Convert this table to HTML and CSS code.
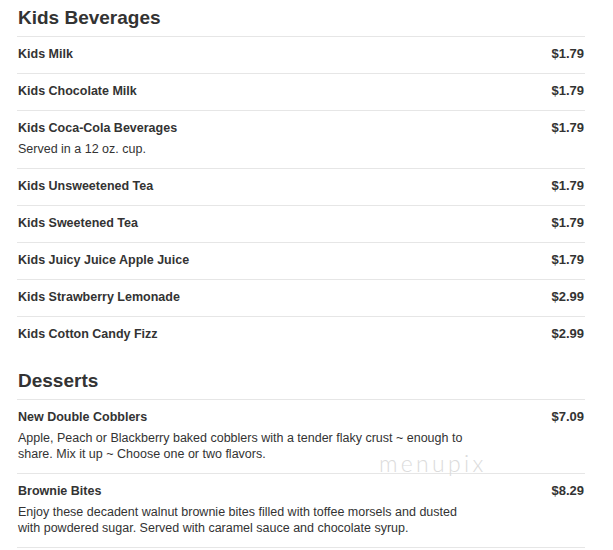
FILE: index.html
```html
<!DOCTYPE html>
<html>
<head>
<meta charset="utf-8">
<link rel="stylesheet" href="styles.css">
</head>
<body>
<div class="menu">
  <section class="section">
    <h2 class="section-title">Kids Beverages</h2>
    <div class="item"><div class="item-main"><div class="item-name">Kids Milk</div></div><div class="item-price">$1.79</div></div>
    <div class="item"><div class="item-main"><div class="item-name">Kids Chocolate Milk</div></div><div class="item-price">$1.79</div></div>
    <div class="item"><div class="item-main"><div class="item-name">Kids Coca-Cola Beverages</div><div class="item-desc">Served in a 12 oz. cup.</div></div><div class="item-price">$1.79</div></div>
    <div class="item"><div class="item-main"><div class="item-name">Kids Unsweetened Tea</div></div><div class="item-price">$1.79</div></div>
    <div class="item"><div class="item-main"><div class="item-name">Kids Sweetened Tea</div></div><div class="item-price">$1.79</div></div>
    <div class="item"><div class="item-main"><div class="item-name">Kids Juicy Juice Apple Juice</div></div><div class="item-price">$1.79</div></div>
    <div class="item"><div class="item-main"><div class="item-name">Kids Strawberry Lemonade</div></div><div class="item-price">$2.99</div></div>
    <div class="item"><div class="item-main"><div class="item-name">Kids Cotton Candy Fizz</div></div><div class="item-price">$2.99</div></div>
  </section>
  <section class="section section-next">
    <h2 class="section-title">Desserts</h2>
    <div class="item"><div class="item-main"><div class="item-name">New Double Cobblers</div><div class="item-desc">Apple, Peach or Blackberry baked cobblers with a tender flaky crust ~ enough to share. Mix it up ~ Choose one or two flavors.</div></div><div class="item-price">$7.09</div></div>
    <div class="item item-bordered"><div class="item-main"><div class="item-name">Brownie Bites</div><div class="item-desc">Enjoy these decadent walnut brownie bites filled with toffee morsels and dusted with powdered sugar. Served with caramel sauce and chocolate syrup.</div></div><div class="item-price">$8.29</div></div>
  </section>
  <div class="watermark">menupix</div>
</div>
</body>
</html>
```
FILE: styles.css
```css
html, body {
  margin: 0;
  padding: 0;
  background: #fff;
}
body {
  font-family: "Liberation Sans", Arial, sans-serif;
  color: #333;
}
.menu {
  position: relative;
  width: 568px;
  margin-left: 17px;
}
.section-title {
  margin: 0;
  padding: 6px 0 6px 1px;
  font-size: 19px;
  line-height: 24px;
  font-weight: bold;
  color: #333;
  border-bottom: 1px solid #e6e6e6;
}
.section-next {
  margin-top: 10px;
}
.item {
  display: flex;
  justify-content: space-between;
  align-items: flex-start;
  padding: 9px 0 11px 1px;
  border-top: 1px solid #e6e6e6;
}
.section-title + .item {
  border-top: none;
}
.item-bordered {
  border-bottom: 1px solid #e6e6e6;
}
.item-main {
  width: 455px;
}
.item-name {
  font-size: 12.5px;
  line-height: 16px;
  font-weight: bold;
  color: #333;
}
.item-desc {
  margin-top: 5px;
  font-size: 12.5px;
  line-height: 16px;
  color: #333;
}
.item-price {
  font-size: 13px;
  line-height: 16px;
  font-weight: bold;
  color: #333;
  padding-right: 1px;
}
.watermark {
  position: absolute;
  left: 362px;
  top: 452px;
  font-family: "Lato", "Liberation Sans", sans-serif;
  font-weight: 300;
  font-size: 23px;
  line-height: 23px;
  letter-spacing: 3.3px;
  color: #dcdcdc;
}
```
